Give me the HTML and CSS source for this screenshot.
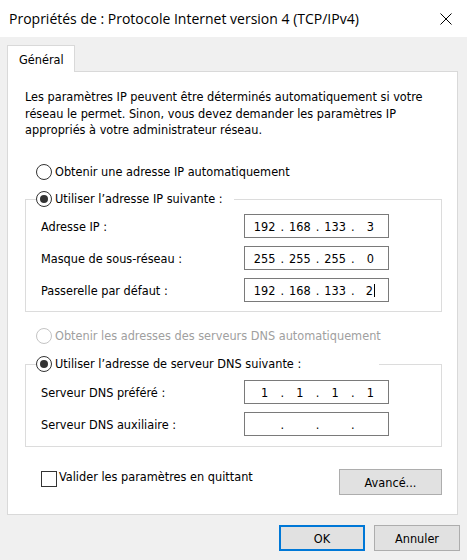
FILE: index.html
```html
<!DOCTYPE html>
<html lang="fr">
<head>
<meta charset="utf-8">
<title>Propriétés de : Protocole Internet version 4 (TCP/IPv4)</title>
<link rel="stylesheet" href="styles.css">
</head>
<body>
<div class="titlebar">
  <span class="title">Propriétés de : Protocole Internet version 4 (TCP/IPv4)</span>
  <svg class="close" width="12" height="12" viewBox="0 0 12 12"><path d="M0.5 0.5 L11.5 11.5 M11.5 0.5 L0.5 11.5" stroke="#000" stroke-width="1" fill="none"/></svg>
</div>
<div class="main">
  <div class="tabs"><div class="tab">Général</div></div>
  <div class="panel">
    <p class="intro">Les paramètres IP peuvent être déterminés automatiquement si votre<br>réseau le permet. Sinon, vous devez demander les paramètres IP<br>appropriés à votre administrateur réseau.</p>

    <div class="radio radio-first"><span class="rb"></span><span>Obtenir une adresse IP automatiquement</span></div>

    <fieldset class="group group-ip">
      <legend class="legend legend-ip"><span class="rb checked"></span><span>Utiliser l’adresse IP suivante :</span></legend>
      <div class="fields">
        <span class="lbl">Adresse IP :</span>
        <div class="ipbox"><span class="seg">192</span><span class="dot">.</span><span class="seg">168</span><span class="dot">.</span><span class="seg">133</span><span class="dot">.</span><span class="seg">3</span></div>
        <span class="lbl">Masque de sous-réseau :</span>
        <div class="ipbox"><span class="seg">255</span><span class="dot">.</span><span class="seg">255</span><span class="dot">.</span><span class="seg">255</span><span class="dot">.</span><span class="seg">0</span></div>
        <span class="lbl">Passerelle par défaut :</span>
        <div class="ipbox"><span class="seg">192</span><span class="dot">.</span><span class="seg">168</span><span class="dot">.</span><span class="seg">133</span><span class="dot">.</span><span class="seg">2<span class="caret"></span></span></div>
      </div>
    </fieldset>

    <div class="radio radio-disabled"><span class="rb"></span><span>Obtenir les adresses des serveurs DNS automatiquement</span></div>

    <fieldset class="group group-dns">
      <legend class="legend legend-dns"><span class="rb checked"></span><span>Utiliser l’adresse de serveur DNS suivante :</span></legend>
      <div class="fields">
        <span class="lbl">Serveur DNS préféré :</span>
        <div class="ipbox"><span class="seg">1</span><span class="dot">.</span><span class="seg">1</span><span class="dot">.</span><span class="seg">1</span><span class="dot">.</span><span class="seg">1</span></div>
        <span class="lbl">Serveur DNS auxiliaire :</span>
        <div class="ipbox"><span class="seg"></span><span class="dot">.</span><span class="seg"></span><span class="dot">.</span><span class="seg"></span><span class="dot">.</span><span class="seg"></span></div>
      </div>
    </fieldset>

    <div class="bottom-row">
      <div class="check"><span class="cb"></span><span class="check-text">Valider les paramètres en quittant</span></div>
      <button class="btn btn-adv" type="button">Avancé...</button>
    </div>
  </div>
  <div class="buttons">
    <button class="btn btn-ok" type="button">OK</button>
    <button class="btn" type="button">Annuler</button>
  </div>
</div>
</body>
</html>
```

FILE: styles.css
```css
* { box-sizing: border-box; }
html, body { margin: 0; padding: 0; }
body {
  width: 467px;
  height: 560px;
  overflow: hidden;
  background: #f0f0f0;
  color: #000;
  font-family: "DejaVu Sans Condensed", "Liberation Sans", sans-serif;
  font-size: 12.6px;
}
.titlebar {
  height: 37px;
  background: #fff;
  display: flex;
  align-items: center;
  justify-content: space-between;
  padding: 0 15px 0 9px;
}
.title {
  font-family: "Open Sans", "Noto Sans", sans-serif;
  font-size: 14px;
  white-space: nowrap;
}
.close { display: block; }
.main { padding: 8px 0 0 7px; }
.tabs { height: 26px; display: flex; }
.tab {
  position: relative;
  z-index: 1;
  width: 68px;
  height: 27px;
  background: #fff;
  border: 1px solid #d9d9d9;
  border-bottom: none;
  padding: 6px 0 0 11px;
  line-height: 16px;
}
.panel {
  width: 451px;
  height: 444px;
  background: #fff;
  border: 1px solid #d9d9d9;
  padding: 17px 15px 0 17px;
  display: flex;
  flex-direction: column;
}
.intro {
  margin: 0;
  line-height: 16.67px;
  white-space: nowrap;
}
.radio {
  display: flex;
  align-items: center;
  height: 16px;
  line-height: 16px;
  padding-left: 11px;
  white-space: nowrap;
}
.radio-first { margin-top: 25px; }
.radio-disabled { margin-top: 16px; color: #a0a0a0; }
.rb {
  flex: none;
  width: 16px;
  height: 16px;
  border: 1px solid #333;
  border-radius: 50%;
  background: #fff;
  margin-right: 3px;
  display: flex;
  align-items: center;
  justify-content: center;
}
.rb.checked::after {
  content: "";
  width: 8px;
  height: 8px;
  border-radius: 50%;
  background: #333;
}
.radio-disabled .rb { border-color: #c4c4c4; }
.group {
  margin: 11px 0 0 0;
  border: 1px solid #dcdcdc;
  padding: 7px 0 9px 10px;
  min-width: 0;
}
.group-dns { margin-top: 12px; padding: 8px 0 10px 10px; }
.legend {
  display: flex;
  align-items: center;
  height: 16px;
  line-height: 16px;
  padding: 0;
  white-space: nowrap;
}
.legend-ip { width: 198px; }
.legend-dns { width: 343px; }
.fields {
  display: grid;
  grid-template-columns: 203px 145px;
  row-gap: 8px;
  align-items: center;
  margin-left: 5px;
}
.lbl { white-space: nowrap; }
.ipbox {
  height: 24px;
  border: 1px solid #7a7a7a;
  background: #fff;
  display: flex;
  align-items: center;
  padding: 0 2px 0 4px;
}
.seg { flex: 1; text-align: center; }
.dot { width: 4px; text-align: center; }
.caret {
  display: inline-block;
  width: 1px;
  height: 13px;
  background: #000;
  vertical-align: -2px;
  margin-left: 1px;
}
.bottom-row {
  margin-top: 22px;
  display: flex;
  justify-content: space-between;
  align-items: flex-start;
}
.check {
  display: flex;
  align-items: flex-start;
  padding-left: 16px;
  line-height: 16px;
}
.cb {
  width: 16px;
  height: 16px;
  border: 1px solid #333;
  background: #fff;
  margin: 2px 2px 0 0;
}
.btn {
  font: inherit;
  color: #000;
  height: 26px;
  background: #e1e1e1;
  border: 1px solid #adadad;
  padding: 0;
  margin: 0;
}
.btn-adv { width: 103px; }
.buttons {
  margin-top: 10px;
  display: flex;
  justify-content: flex-end;
  gap: 9px;
  padding-right: 7px;
}
.buttons .btn { width: 86px; }
.btn-ok { border: 2px solid #0078d7; }
```
